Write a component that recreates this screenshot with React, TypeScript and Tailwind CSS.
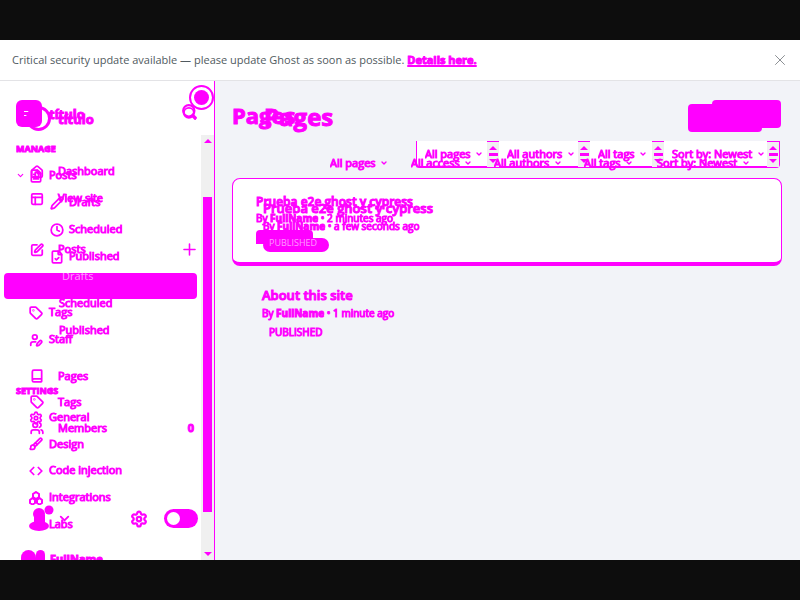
import React from "react";
import { X, ChevronDown, Search, Settings, Tag, Code, Clock, Pencil, Brush, SquarePen, PanelsTopLeft, Book, Users, UserPen, House, FileText, FileCheck, Plus } from "lucide-react";

type IconType = React.ComponentType<{ size?: number; strokeWidth?: number; className?: string }>;

function Boxes({ size = 14 }: { size?: number }) {
  return (
    <svg width={size} height={size} viewBox="0 0 14 14" fill="none" stroke="currentColor" strokeWidth="2">
      <path d="M7 1 10 3v3L7 8 4 6V3zM3.500 7 6 9v3l-2.500 1.500L1 12V9zM10.500 7 13 9v3l-2.500 1.500L8 12V9z" />
    </svg>
  );
}

function NavRow({ icon: Icon, label, pad, gap, chevron, plus, count, height = "h-[27px]" }: {
  icon?: IconType; label: string; pad: string; gap: string; chevron?: boolean; plus?: boolean; count?: string; height?: string;
}) {
  return (
    <a href="#" className={`flex shrink-0 items-center pr-[2px] ${height} ${pad}`}>
      {chevron && <ChevronDown size={9} strokeWidth={3} className="mr-1 shrink-0" />}
      {Icon && <Icon size={14} strokeWidth={3} />}
      <span className={`whitespace-nowrap ${gap}`}>{label}</span>
      {plus && <Plus size={19} strokeWidth={2} className="ml-auto" />}
      {count && <span className="ml-auto pr-[5px] font-bold">{count}</span>}
    </a>
  );
}

function Heading({ children }: { children: string }) {
  return <h2 className="flex h-[27px] shrink-0 items-center pl-4 text-[9px] font-bold">{children}</h2>;
}

function ContentNav() {
  return (
    <nav aria-label="Content" className="flex h-full flex-col overflow-hidden [grid-area:1/1]">
      <div className="flex h-[54px] shrink-0 items-start pl-4 pr-[3px] pt-[19px]">
        <div className="flex h-[27px] w-[26px] shrink-0 flex-col justify-center gap-[3px] rounded-md bg-[#ff00ff] pl-2">
          <span className="h-px w-[5px] bg-white" />
          <span className="h-px w-[5px] bg-white" />
        </div>
        <span className="whitespace-nowrap pl-[7px] pt-1 text-[13px] font-bold leading-5">título</span>
        <button aria-label="Search" className="ml-auto pt-[3px]"><Search size={17} strokeWidth={3} /></button>
      </div>
      <Heading>MANAGE</Heading>
      <NavRow icon={FileText} label="Posts" pad="pl-4" gap="pl-[6px]" chevron />
      <NavRow icon={Pencil} label="Drafts" pad="pl-[50px]" gap="pl-[5px]" />
      <NavRow icon={Clock} label="Scheduled" pad="pl-[50px]" gap="pl-[5px]" />
      <NavRow icon={FileCheck} label="Published" pad="pl-[50px]" gap="pl-[5px]" />
      <a href="#" aria-label="Pages" className="ml-1 mr-1 mt-[3px] block h-[26px] shrink-0 rounded bg-[#ff00ff]" />
      <NavRow icon={Tag} label="Tags" pad="pl-[29px]" gap="pl-[6px]" />
      <NavRow icon={UserPen} label="Staff" pad="pl-[29px]" gap="pl-[6px]" />
      <div className="h-6 shrink-0" />
      <Heading>SETTINGS</Heading>
      <NavRow icon={Settings} label="General" pad="pl-[29px]" gap="pl-[6px]" />
      <NavRow icon={Brush} label="Design" pad="pl-[29px]" gap="pl-[6px]" height="h-[26px]" />
      <NavRow icon={Code} label="Code injection" pad="pl-[29px]" gap="pl-[6px]" />
      <NavRow icon={Boxes} label="Integrations" pad="pl-[29px]" gap="pl-[6px]" />
      <NavRow label="Labs" pad="pl-[29px]" gap="pl-5" height="h-[26px]" />
      <div className="flex shrink-0 items-center pl-[21px] pt-2">
        <span className="h-[18px] w-[15px] rounded-t-full bg-[#ff00ff]" />
        <span className="h-[18px] w-[9px] rounded-t-full bg-[#ff00ff]" />
        <span className="h-[27px] pl-[5px] text-[11px] leading-[27px] font-bold">FullName</span>
      </div>
    </nav>
  );
}

function SiteNav() {
  return (
    <nav aria-label="Site" className="flex h-full flex-col overflow-hidden [grid-area:1/1]">
      <div className="flex h-[77px] shrink-0 items-start pl-[26px] pr-1 pt-[25px]">
        <div className="size-[25px] shrink-0 rounded-full border-[3px] border-[#ff00ff]" />
        <span className="whitespace-nowrap pl-[7px] pt-[3px] text-[13px] font-bold leading-5">título</span>
        <button aria-label="Find" className="ml-auto"><Search size={15} strokeWidth={3} /></button>
      </div>
      <NavRow icon={House} label="Dashboard" pad="pl-[30px]" gap="pl-[14px]" />
      <NavRow icon={PanelsTopLeft} label="View site" pad="pl-[30px]" gap="pl-[14px]" />
      <div className="h-6 shrink-0" />
      <NavRow icon={SquarePen} label="Posts" pad="pl-[30px]" gap="pl-[14px]" plus />
      <NavRow label="Drafts" pad="pl-[62px]" gap="text-white/60 [-webkit-text-stroke:0px]" />
      <NavRow label="Scheduled" pad="pl-[59px]" gap="" />
      <NavRow label="Published" pad="pl-[59px]" gap="" />
      <div className="h-[19px] shrink-0" />
      <NavRow icon={Book} label="Pages" pad="pl-[30px]" gap="pl-[14px]" height="h-[26px]" />
      <NavRow icon={Tag} label="Tags" pad="pl-[30px]" gap="pl-[14px]" height="h-[26px]" />
      <NavRow icon={Users} label="Members" pad="pl-[30px]" gap="pl-[14px]" count="0" height="h-[26px]" />
      <div className="mb-7 mt-auto flex shrink-0 items-center pl-[27px] pr-[3px]">
        <svg width="30" height="27" viewBox="0 0 30 27" fill="currentColor">
          <circle cx="12" cy="9" r="6" /><circle cx="22" cy="5" r="4.500" />
          <path d="M7 10h11v9H7z" /><ellipse cx="12" cy="21" rx="10" ry="5" />
        </svg>
        <ChevronDown size={15} strokeWidth={3} />
        <button aria-label="Settings" className="ml-auto"><Settings size={18} strokeWidth={3} /></button>
        <label className="ml-4 flex h-[19px] w-[34px] shrink-0 items-center rounded-full bg-[#ff00ff] pl-[3px]">
          <input type="checkbox" aria-label="Dark mode" className="size-[13px] appearance-none rounded-full bg-white" />
        </label>
      </div>
    </nav>
  );
}

function Scrollbar() {
  return (
    <div className="mt-[54px] flex w-[13px] shrink-0 flex-col items-center bg-[#f0f0f0] py-1">
      <svg width="8" height="4" viewBox="0 0 8 4" fill="currentColor"><path d="M0 4 4 0l4 4z" /></svg>
      <div className="mb-10 mt-[54px] w-[9px] flex-1 bg-[#ff00ff]" />
      <svg width="8" height="4" viewBox="0 0 8 4" fill="currentColor"><path d="M0 0h8L4 4z" /></svg>
    </div>
  );
}

function Filter({ label, width }: { label: string; width: string }) {
  return (
    <label className={`flex h-5 shrink-0 items-center ${width}`}>
      <select aria-label={label} className="min-w-0 appearance-none bg-transparent text-[11px] font-medium leading-5 [-webkit-text-stroke:1px_#ff00ff]">
        <option>{label}</option>
      </select>
      <ChevronDown size={8} strokeWidth={4} className="ml-1 shrink-0" />
    </label>
  );
}

function Spinner() {
  return (
    <div className="flex h-[26px] w-3 shrink-0 flex-col items-center border-t border-[#ff00ff] bg-[#f0f0f0] pt-1">
      <svg width="8" height="4" viewBox="0 0 8 4" fill="currentColor"><path d="M0 4 4 0l4 4z" /></svg>
      <div className="my-[3px] h-[3px] w-[9px] bg-[#ff00ff]" />
      <svg width="8" height="4" viewBox="0 0 8 4" fill="currentColor"><path d="M0 0h8L4 4z" /></svg>
    </div>
  );
}

function Post({ title, meta, large }: { title: string; meta: string; large?: boolean }) {
  return (
    <div>
      <h3 className={large ? "text-[13px] leading-[18px] font-semibold" : "text-[12px] leading-[18px] font-semibold"}>{title}</h3>
      <p className={large ? "text-[10px] leading-[18px] font-medium" : "text-[10px] leading-[14px] font-medium"}>By <b>FullName</b> • {meta}</p>
    </div>
  );
}

export default function App() {
  return (
    <div className="flex min-h-screen flex-col bg-[#0d0d0d] py-10 font-['Open_Sans','Noto_Sans',sans-serif] text-[11px]">
      <header className="flex h-[41px] shrink-0 items-center border-b border-[#e3e3e6] bg-white px-3 text-[#505a60]">
        <p className="whitespace-nowrap font-medium">
          Critical security update available — please update Ghost as soon as possible.{" "}
          <a href="#" className="font-bold text-[#ff00ff] underline decoration-2 [-webkit-text-stroke:1px_#ff00ff]">Details here.</a>
        </p>
        <button aria-label="Close" className="-mr-[1px] ml-auto text-[#666b70]"><X size={18} strokeWidth={1} /></button>
      </header>
      <div className="flex min-h-0 flex-1 text-[#ff00ff]">
        <aside className="relative flex w-[215px] shrink-0 border-r border-[#ff00ff] bg-white font-medium [-webkit-text-stroke:1px_#ff00ff]">
          <div className="grid h-[479px] min-w-0 flex-1 grid-rows-1 overflow-hidden">
            <ContentNav />
            <SiteNav />
          </div>
          <Scrollbar />
          <div className="absolute right-0 top-1 flex size-[25px] items-center justify-center rounded-full border-2 border-[#ff00ff] bg-white">
            <span className="size-[15px] rounded-full bg-[#ff00ff]" />
          </div>
        </aside>
        <main className="min-w-0 flex-1 bg-[#f2f3f8] pl-[17px] pr-[18px]">
          <div className="grid h-[60px]">
            <div className="flex items-start [grid-area:1/1]">
              <h1 className="pt-[18px] text-[22px] leading-8 font-bold [-webkit-text-stroke:1px_#ff00ff]">Pages</h1>
              <button aria-label="New page" className="ml-auto mr-5 mt-[23px] h-7 w-[74px] rounded-sm bg-[#ff00ff]" />
            </div>
            <div className="flex items-start [grid-area:1/1]">
              <h1 className="pl-8 pt-5 text-[24px] leading-8 font-bold [-webkit-text-stroke:1px_#ff00ff]">Pages</h1>
              <button aria-label="Create page" className="ml-auto mr-px mt-[19px] h-7 w-[69px] rounded-sm bg-[#ff00ff]" />
            </div>
          </div>
          <div className="grid h-[27px] justify-items-end">
            <div className="mr-[2px] flex h-[27px] w-[364px] items-center rounded-b border-x border-b-2 border-[#ff00ff] bg-white pl-2 [grid-area:1/1]">
              <Filter label="All pages" width="w-[62px]" /><Spinner />
              <div className="w-2 shrink-0" /><Filter label="All authors" width="w-[71px]" /><Spinner />
              <div className="w-2 shrink-0" /><Filter label="All tags" width="w-[54px]" /><Spinner />
              <div className="w-2 shrink-0" /><Filter label="Sort by: Newest" width="w-[95px]" /><Spinner />
            </div>
            <div className="z-10 flex h-[27px] w-[452px] items-start pt-3 [grid-area:1/1]">
              <Filter label="All pages" width="w-[81px]" />
              <Filter label="All access" width="w-[83px]" />
              <Filter label="All authors" width="w-[90px]" />
              <Filter label="All tags" width="w-[73px]" />
              <Filter label="Sort by: Newest" width="w-[102px]" />
            </div>
          </div>
          <section className="mt-[10px] grid h-[88px] rounded-lg border border-b-4 border-[#ff00ff] bg-white [-webkit-text-stroke:1px_#ff00ff]">
            <div className="pl-[23px] pt-[14px] [grid-area:1/1]">
              <Post title="Prueba e2e ghost y cypress" meta="2 minutes ago" />
              <span className="mt-[5px] block h-[14px] w-[57px] rounded-t bg-[#ff00ff]" />
            </div>
            <div className="pl-[30px] pt-5 [grid-area:1/1]">
              <Post title="Prueba e2e ghost y cypress" meta="a few seconds ago" large />
              <span className="mt-[3px] block h-[14px] w-[66px] rounded-full bg-[#ff00ff] pl-[6px] text-[9px] leading-[10px] text-white/60 [-webkit-text-stroke:0px]">PUBLISHED</span>
            </div>
          </section>
          <section className="pl-[30px] pt-5 [-webkit-text-stroke:1px_#ff00ff]">
            <Post title="About this site" meta="1 minute ago" large />
            <span className="block pl-[7px] pt-px text-[10px] leading-[18px] font-medium">PUBLISHED</span>
          </section>
        </main>
      </div>
    </div>
  );
}
